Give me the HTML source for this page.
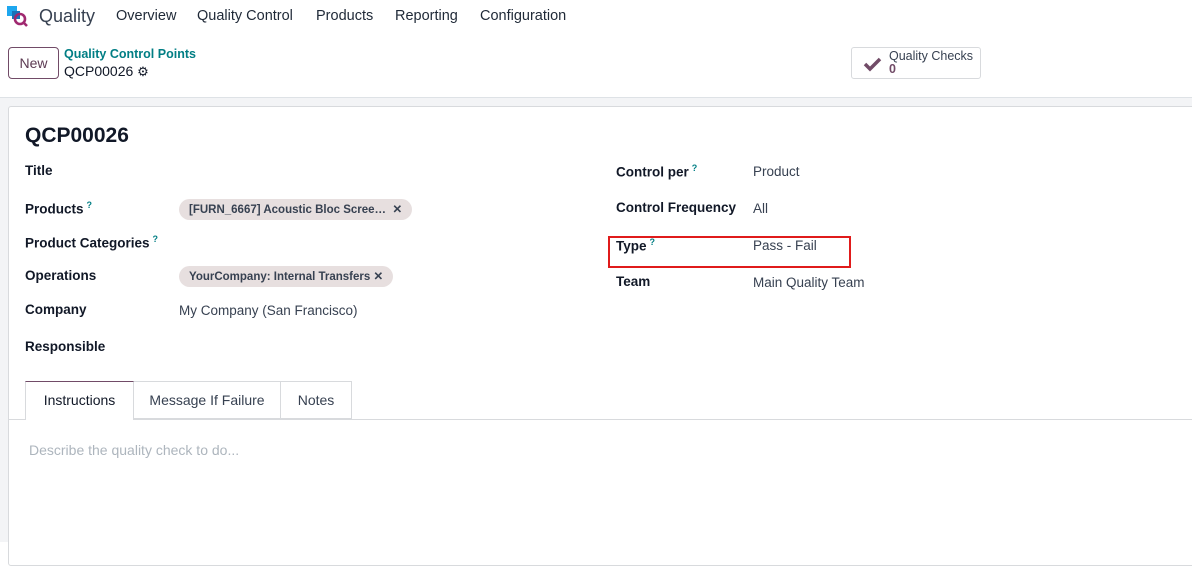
<!DOCTYPE html>
<html><head><style>
*{box-sizing:border-box;margin:0;padding:0}
body{width:1192px;height:542px;overflow:hidden;background:#fff;font-family:"Liberation Sans",sans-serif;color:#374151;font-size:14px;position:relative}
.a{position:absolute;white-space:nowrap}
.nav{color:#1f2937;font-size:14.5px}
.lbl{font-weight:bold;color:#111827;font-size:13.5px}
.val{color:#374151;font-size:13.5px}
.tag{position:absolute;background:#e7dfdf;border-radius:11px;height:21px;font-size:11.5px;font-weight:bold;color:#374151;padding:3px 10px;white-space:nowrap}
sup{color:#017e84;font-size:9px;font-weight:bold;margin-left:3px}
</style></head><body>
<div class="a" style="left:0;top:97px;width:1192px;height:445px;background:#f3f4f6;border-top:1px solid #dee2e6"></div>
<div class="a" style="left:8px;top:106px;width:1190px;height:460px;background:#fff;border:1px solid #d8dadd;border-radius:3px"></div>
<svg class="a" style="left:7px;top:6px" width="24" height="22"><rect x="0" y="0" width="10" height="10" fill="#1ea7ef"/><rect x="5" y="5" width="8" height="8" fill="#1a73b8"/><circle cx="13" cy="13" r="5" fill="none" stroke="#a02970" stroke-width="2.6"/><line x1="16" y1="16" x2="20" y2="20" stroke="#a02970" stroke-width="2.6"/></svg>
<div class="a nav" style="left:39px;top:6px;font-size:18px;color:#374151">Quality</div>
<div class="a nav" style="left:116px;top:8px">Overview</div>
<div class="a nav" style="left:197px;top:8px">Quality Control</div>
<div class="a nav" style="left:316px;top:8px">Products</div>
<div class="a nav" style="left:395px;top:8px">Reporting</div>
<div class="a nav" style="left:480px;top:8px">Configuration</div>
<div class="a" style="left:8px;top:47px;width:51px;height:32px;border:1px solid #714b67;border-radius:4px;text-align:center;line-height:30px;font-size:14px;color:#5c3a52">New</div>
<div class="a" style="left:64px;top:47px;color:#017e84;font-weight:bold;font-size:12.5px">Quality Control Points</div>
<div class="a" style="left:64px;top:63px;color:#111827;font-size:14px">QCP00026 <span style="font-size:13px">⚙</span></div>
<div class="a" style="left:851px;top:47px;width:130px;height:32px;border:1px solid #d8dadd;border-radius:3px"></div>
<svg class="a" style="left:863px;top:56px" width="20" height="16"><path d="M2 8 L7 13 L17 3" fill="none" stroke="#714b67" stroke-width="3.5"/></svg>
<div class="a" style="left:889px;top:50px;font-size:12.5px;color:#374151;line-height:13px">Quality Checks<br><span style="color:#714b67;font-weight:bold">0</span></div>
<div class="a" style="left:25px;top:124px;font-size:21px;font-weight:bold;color:#111827">QCP00026</div>
<div class="a lbl" style="left:25px;top:163px">Title</div>
<div class="a lbl" style="left:25px;top:200px">Products<sup>?</sup></div>
<div class="a lbl" style="left:25px;top:234px">Product Categories<sup>?</sup></div>
<div class="a lbl" style="left:25px;top:268px">Operations</div>
<div class="a lbl" style="left:25px;top:302px">Company</div>
<div class="a lbl" style="left:25px;top:339px">Responsible</div>
<div class="tag" style="left:179px;top:199px">[FURN_6667] Acoustic Bloc Scree… &nbsp;✕</div>
<div class="tag" style="left:179px;top:266px">YourCompany: Internal Transfers ✕</div>
<div class="a val" style="left:179px;top:303px">My Company (San Francisco)</div>
<div class="a lbl" style="left:616px;top:163px">Control per<sup>?</sup></div>
<div class="a lbl" style="left:616px;top:200px">Control Frequency</div>
<div class="a lbl" style="left:616px;top:237px">Type<sup>?</sup></div>
<div class="a lbl" style="left:616px;top:274px">Team</div>
<div class="a val" style="left:753px;top:164px">Product</div>
<div class="a val" style="left:753px;top:201px">All</div>
<div class="a val" style="left:753px;top:238px">Pass - Fail</div>
<div class="a val" style="left:753px;top:275px">Main Quality Team</div>
<div class="a" style="left:608px;top:236px;width:243px;height:32px;border:2px solid #e01b1b"></div>
<div class="a" style="left:9px;top:419px;width:1183px;border-top:1px solid #d8dadd"></div>
<div class="a" style="left:25px;top:381px;width:109px;height:39px;background:#fff;border:1px solid #d8dadd;border-top:1px solid #714b67;border-bottom:none;text-align:center;line-height:37px;color:#111827">Instructions</div>
<div class="a" style="left:134px;top:381px;width:147px;height:38px;border:1px solid #d8dadd;border-left:none;text-align:center;line-height:37px;color:#374151">Message If Failure</div>
<div class="a" style="left:281px;top:381px;width:71px;height:38px;border:1px solid #d8dadd;border-left:none;text-align:center;line-height:37px;color:#374151">Notes</div>
<div class="a" style="left:29px;top:442px;color:#adb5bd">Describe the quality check to do...</div>
</body></html>
